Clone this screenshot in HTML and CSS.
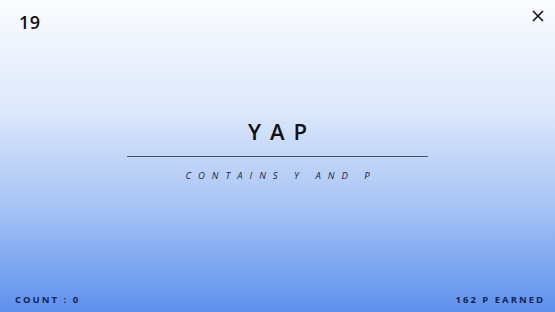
FILE: index.html
```html
<!DOCTYPE html>
<html lang="en">
<head>
  <meta charset="UTF-8" />
  <title>Word game</title>
  <link rel="stylesheet" href="styles.css">
</head>
<body>
  <div class="screen">
    <div class="top-bar">
      <div class="level">19</div>
      <button class="close" aria-label="Close">
        <svg width="12" height="12" viewBox="0 0 12 12">
          <path d="M1 1 L11 11 M11 1 L1 11" stroke="#111" stroke-width="1.6" fill="none"/>
        </svg>
      </button>
    </div>

    <div class="word-box">
      <div class="word">YAP</div>
      <div class="rule"></div>
      <div class="hint">CONTAINS Y AND P</div>
    </div>

    <div class="bottom-bar">
      <div class="stat">COUNT : 0</div>
      <div class="stat">162 P EARNED</div>
    </div>
  </div>
</body>
</html>
```

FILE: styles.css
```css
* {
  box-sizing: border-box;
  margin: 0;
  padding: 0;
}

body, html {
  height: 100%;
  font-family: 'Open Sans', 'Noto Sans', sans-serif;
}

.screen {
  height: 100vh;
  display: flex;
  flex-direction: column;
  background: linear-gradient(to bottom, #fbfcff 0%, #dde8fb 35%, #a9c5f5 65%, #5e90ee 100%);
  color: #111;
}

.top-bar {
  display: flex;
  justify-content: space-between;
  align-items: flex-start;
  padding: 10px 10px 0 19px;
  height: 40px;
}

.level {
  font-size: 18px;
  font-weight: 600;
  letter-spacing: 0.5px;
}

.close {
  background: none;
  border: none;
  width: 14px;
  height: 14px;
  cursor: pointer;
}

/* word in the middle */
.word-box {
  flex: 1;
  display: flex;
  flex-direction: column;
  align-items: center;
  padding-top: 76px;
}

.word {
  font-size: 22px;
  font-weight: 600;
  letter-spacing: 9px;
  margin-right: -9px;
  line-height: 30px;
}

.rule {
  width: 301px;
  height: 1px;
  background: #4a5566;
  margin-top: 10px;
}

.hint {
  margin-top: 12px;
  font-size: 9.5px;
  font-style: italic;
  font-weight: 500;
  letter-spacing: 7px;
  margin-right: -7px;
  color: #1c2540;
}

.bottom-bar {
  display: flex;
  justify-content: space-between;
  padding: 0 10px 6px 15px;
}

.stat {
  font-size: 9.5px;
  font-weight: 700;
  letter-spacing: 2px;
  color: #14234a;
}
```
